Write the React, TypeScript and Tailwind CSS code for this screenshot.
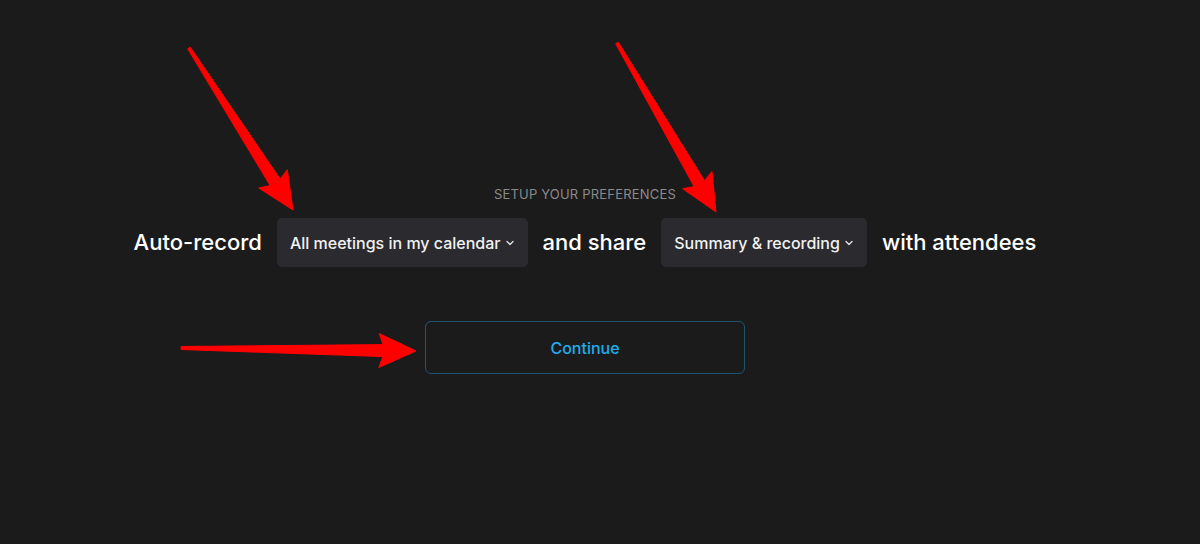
import React from 'react';
import { ChevronDown } from 'lucide-react';

type Pt = [number, number];

// builds a tapered annotation arrow polygon from tail to tip
function arrowPoints(tail: Pt, tip: Pt, headLen = 33, headHalf = 17, shaftHalf = 6, tailHalf = 1.5) {
  const dx = tip[0] - tail[0];
  const dy = tip[1] - tail[1];
  const len = Math.hypot(dx, dy);
  const ux = dx / len;
  const uy = dy / len;
  const nx = -uy;
  const ny = ux;
  const bx = tip[0] - ux * headLen;
  const by = tip[1] - uy * headLen;
  const back = 4;
  const pts: Pt[] = [
    [tail[0] + nx * tailHalf, tail[1] + ny * tailHalf],
    [bx + nx * shaftHalf, by + ny * shaftHalf],
    [bx - ux * back + nx * headHalf, by - uy * back + ny * headHalf],
    [tip[0], tip[1]],
    [bx - ux * back - nx * headHalf, by - uy * back - ny * headHalf],
    [bx - nx * shaftHalf, by - ny * shaftHalf],
    [tail[0] - nx * tailHalf, tail[1] - ny * tailHalf],
  ];
  return pts.map((p) => `${p[0].toFixed(1)},${p[1].toFixed(1)}`).join(' ');
}

const arrows: { tail: Pt; tip: Pt }[] = [
  { tail: [189, 48], tip: [293, 210] },
  { tail: [617, 43], tip: [716, 212] },
  { tail: [181, 348], tip: [416, 351] },
];

const Select: React.FC<{ label: string }> = ({ label }) => (
  <button className="flex h-[49px] items-center gap-[3px] rounded-[5px] bg-[#2a2a2f] pl-[13px] pr-[12px] text-[16px] font-medium text-[#f2f2f2]">
    <span>{label}</span>
    <ChevronDown size={12} strokeWidth={2.5} className="mt-[1px] text-[#e5e5e5]" />
  </button>
);

export default function App() {
  return (
    <div
      className="relative h-[544px] w-[1200px] overflow-hidden bg-[#1b1b1b]"
      style={{ fontFamily: 'Inter, "Noto Sans", sans-serif' }}
    >
      <div className="flex w-[1170px] flex-col items-center pt-[185px]">
        <div className="text-[13px] leading-[18px] tracking-[0.2px] text-[#8a8a8a] uppercase">Setup your preferences</div>

        <div className="mt-[15px] flex items-center gap-[15px] text-[22px] font-medium text-white">
          <span>Auto-record</span>
          <Select label="All meetings in my calendar" />
          <span>and share</span>
          <Select label="Summary & recording" />
          <span>with attendees</span>
        </div>

        <button className="mt-[54px] h-[53px] w-[320px] rounded-[6px] border border-[#1b5670] text-[16px] font-medium text-[#1fadec]">
          Continue
        </button>
      </div>

      {/* annotation arrows */}
      <svg className="pointer-events-none absolute inset-0" width="1200" height="544">
        {arrows.map((a, i) => (
          <polygon key={i} points={arrowPoints(a.tail, a.tip)} fill="#ff0000" stroke="#ff0000" strokeWidth="1" strokeLinejoin="round" />
        ))}
      </svg>
    </div>
  );
}
